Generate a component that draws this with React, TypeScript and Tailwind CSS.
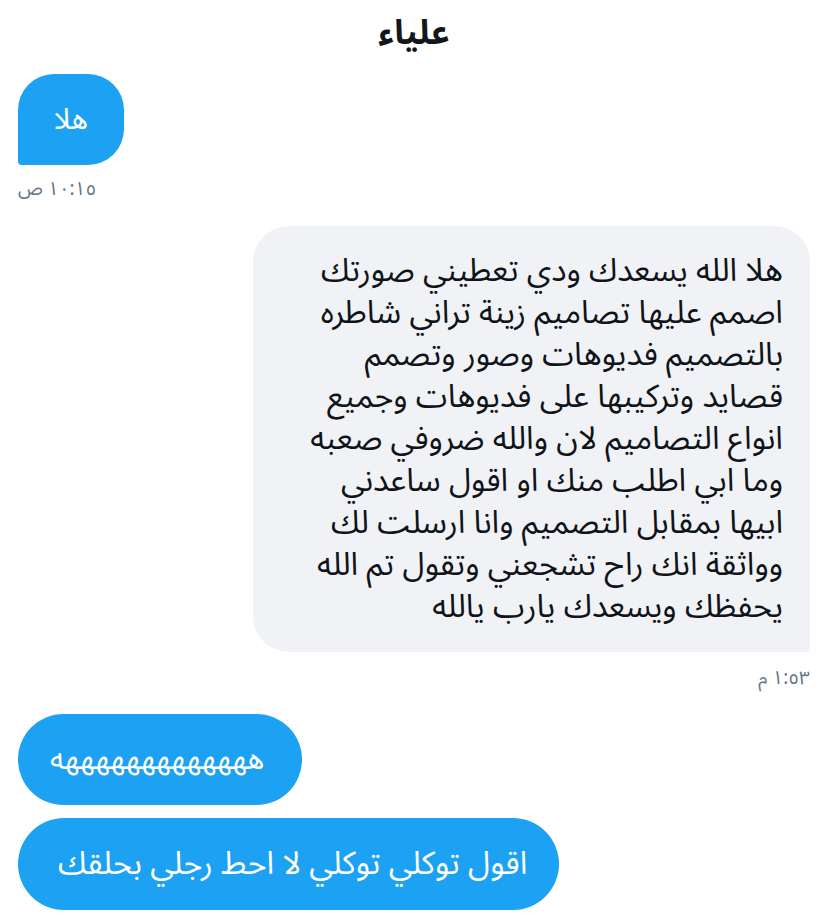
import React from "react";

const arabicFont = {
  fontFamily: '"Noto Sans Arabic", "Noto Naskh Arabic", "DejaVu Sans", sans-serif',
};

const lines = [
  "هلا الله يسعدك ودي تعطيني صورتك",
  "اصمم عليها تصاميم زينة تراني شاطره",
  "بالتصميم فديوهات وصور وتصمم",
  "قصايد وتركيبها على فديوهات وجميع",
  "انواع التصاميم لان والله ضروفي صعبه",
  "وما ابي اطلب منك او اقول ساعدني",
  "ابيها بمقابل التصميم وانا ارسلت لك",
  "وواثقة انك راح تشجعني وتقول تم الله",
  "يحفظك ويسعدك يارب يالله",
];

export default function App() {
  return (
    <div className="w-[828px] h-[922px] bg-white overflow-hidden" style={arabicFont}>
      {/* العنوان */}
      <div className="h-[66px] flex items-center justify-center">
        <h1 dir="rtl" className="text-[34px] leading-[44px] font-bold text-[#14171a]">
          علياء
        </h1>
      </div>

      <div className="px-[18px] flex flex-col">
        {/* رسالة مرسلة */}
        <div className="mt-[8px] flex">
          <div
            dir="rtl"
            className="h-[91px] w-[106px] flex items-center justify-center bg-[#1da1f2] text-white text-[29px] rounded-[36px] rounded-bl-[4px]"
          >
            هلا
          </div>
        </div>
        <div dir="rtl" className="mt-[10px] self-start text-[19px] text-[#657786]">
          ١٠:١٥ ص
        </div>

        {/* رسالة مستلمة */}
        <div className="mt-[22px] flex justify-end">
          <div
            dir="rtl"
            className="w-[557px] h-[426px] bg-[#f1f2f6] rounded-[36px] rounded-br-[4px] pt-[24px] pr-[27px] text-[32px] leading-[42px] text-[#0f1419]"
          >
            {lines.map((l, i) => (
              <div key={i}>{l}</div>
            ))}
          </div>
        </div>
        <div dir="rtl" className="mt-[12px] self-end text-[19px] text-[#657786]">
          ١:٥٣ م
        </div>

        {/* رسائل مرسلة */}
        <div className="mt-[22px] flex flex-col items-start gap-[13px]">
          <div
            dir="rtl"
            className="h-[91px] pl-[32px] pr-[38px] flex items-center bg-[#1da1f2] text-white text-[30px] rounded-full"
          >
            هههههههههههههه
          </div>
          <div
            dir="rtl"
            className="h-[92px] pl-[40px] pr-[32px] flex items-center bg-[#1da1f2] text-white text-[32px] rounded-full"
          >
            اقول توكلي توكلي لا احط رجلي بحلقك
          </div>
        </div>
      </div>
    </div>
  );
}
